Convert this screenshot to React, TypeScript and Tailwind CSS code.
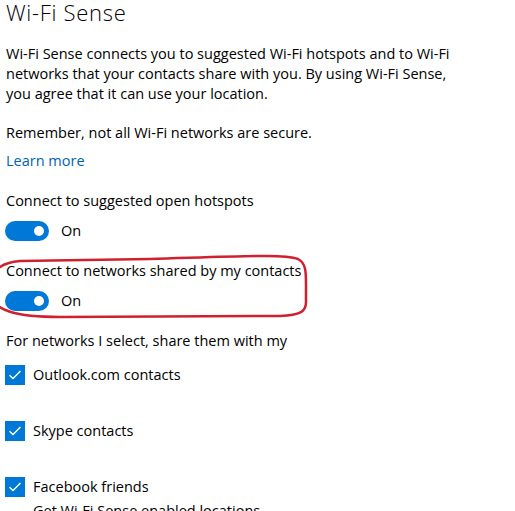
import React from "react";

const font = { fontFamily: '"Open Sans", "Noto Sans", sans-serif' };

function Toggle() {
  return (
    <div className="flex items-center h-5">
      <div className="relative w-[44px] h-5 rounded-full bg-[#0078d7]">
        <div className="absolute right-[5px] top-[5px] w-[10px] h-[10px] rounded-full bg-white" />
      </div>
      <span className="ml-3 text-[14.5px] leading-5 text-black">On</span>
    </div>
  );
}

function Check({ label }: { label: string }) {
  return (
    <div className="flex items-center h-5">
      <div className="w-5 h-5 bg-[#0078d7] flex items-center justify-center">
        <svg width="14" height="14" viewBox="0 0 14 14">
          <path d="M1.5 7.2 L5 10.6 L12.5 3" fill="none" stroke="white" strokeWidth="1.4" />
        </svg>
      </div>
      <span className="ml-2 text-[14.5px] leading-5 text-black">{label}</span>
    </div>
  );
}

export default function App() {
  return (
    <div className="relative w-[515px] h-[511px] overflow-hidden bg-white" style={font}>
      <div className="pl-[5px] flex flex-col">
        <div className="ml-px text-[22px] tracking-[0.7px] font-light leading-[24px] text-black">Wi-Fi Sense</div>
        <div className="ml-px mt-5 text-[14.5px] leading-5 text-black">
          Wi-Fi Sense connects you to suggested Wi-Fi hotspots and to Wi-Fi
          <br />
          networks that your contacts share with you. By using Wi-Fi Sense,
          <br />
          you agree that it can use your location.
        </div>
        <div className="ml-px mt-[19px] text-[14.5px] leading-5 text-black">Remember, not all Wi-Fi networks are secure.</div>
        <div className="ml-px mt-2 text-[14.5px] leading-5 text-[#0063b1]">Learn more</div>
        <div className="ml-px mt-5 text-[14.5px] leading-5 text-black">Connect to suggested open hotspots</div>
        <div className="mt-[10px]"><Toggle /></div>
        <div className="ml-px mt-5 text-[14.5px] leading-5 text-black">Connect to networks shared by my contacts</div>
        <div className="mt-[10px]"><Toggle /></div>
        <div className="ml-px mt-5 text-[14.5px] leading-5 text-black">For networks I select, share them with my</div>
        <div className="mt-[14px]"><Check label="Outlook.com contacts" /></div>
        <div className="mt-9"><Check label="Skype contacts" /></div>
        <div className="mt-9"><Check label="Facebook friends" /></div>
        <div className="ml-7 mt-[4px] text-[14.5px] leading-5 text-black">Get Wi-Fi Sense enabled locations</div>
      </div>
      <svg className="absolute left-0 top-0 pointer-events-none" width="515" height="511" viewBox="0 0 515 511">
        <path
          d="M-10 290 C -10 272 -2 263 20 261 L 150 259 C 250 256 285 254 298 259 C 306 263 306 272 306 285 L 306 302 C 306 312 300 315 280 316 L 60 317 C 20 317 -10 312 -10 290 Z"
          fill="none"
          stroke="#d0202f"
          strokeWidth="2.5"
        />
      </svg>
    </div>
  );
}
